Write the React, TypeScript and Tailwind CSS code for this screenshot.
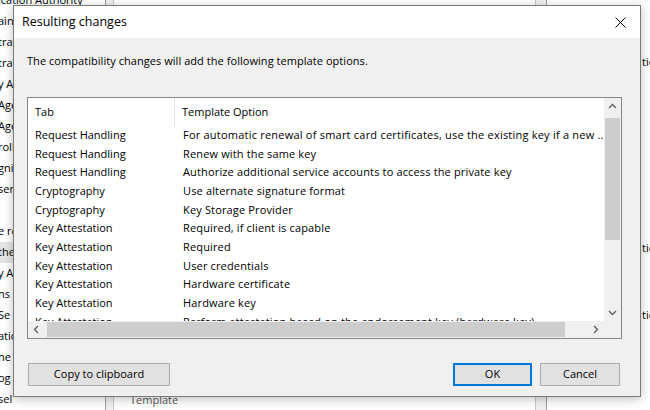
import React from 'react';

const font = "font-['Open_Sans','Noto_Sans',sans-serif]";

const leftItems: { text: string; active?: boolean }[] = [
  { text: 'ication Authority' },
  { text: 'ain Controller' },
  { text: 'tration' },
  { text: 'tration' },
  { text: 'y Agent' },
  { text: 'Agent' },
  { text: 'Agent' },
  { text: 'roll' },
  { text: 'gning' },
  { text: 'ser' },
  { text: '' },
  { text: 'e re' },
  { text: 'the', active: true },
  { text: 'y Agent' },
  { text: 'ns' },
  { text: ' Se' },
  { text: 'ation' },
  { text: 'ne' },
  { text: 'og' },
  { text: 'sel' },
];

const rows: [string, string][] = [
  ['Request Handling', 'For automatic renewal of smart card certificates, use the existing key if a new ...'],
  ['Request Handling', 'Renew with the same key'],
  ['Request Handling', 'Authorize additional service accounts to access the private key'],
  ['Cryptography', 'Use alternate signature format'],
  ['Cryptography', 'Key Storage Provider'],
  ['Key Attestation', 'Required, if client is capable'],
  ['Key Attestation', 'Required'],
  ['Key Attestation', 'User credentials'],
  ['Key Attestation', 'Hardware certificate'],
  ['Key Attestation', 'Hardware key'],
  ['Key Attestation', 'Perform attestation based on the endorsement key (hardware key)'],
];

const Chevron = ({ dir }: { dir: 'up' | 'down' | 'left' | 'right' }) => {
  const pts = {
    up: '1,6 4.5,2.5 8,6',
    down: '1,3 4.5,6.5 8,3',
    left: '6,1 2.5,4.5 6,8',
    right: '3,1 6.5,4.5 3,8',
  }[dir];
  return (
    <svg width="9" height="9" viewBox="0 0 9 9">
      <polyline points={pts} fill="none" stroke="#606060" strokeWidth="1.4" />
    </svg>
  );
};

const Backdrop = () => (
  <div className="flex h-full">
    <div className="w-[106px] shrink-0 bg-white border-r border-[#a0a0a0] overflow-hidden">
      <div className="flex flex-col -mt-[10px]">
        {leftItems.map((item, i) => (
          <div
            key={i}
            className={`h-[21px] flex items-center whitespace-nowrap text-[11px] -ml-[2px] ${item.active ? 'bg-[#e5e5e5]' : ''}`}
          >
            {item.text}
          </div>
        ))}
      </div>
    </div>
    <div className="w-[441px] shrink-0 flex border-r border-[#a0a0a0]">
      <div className="ml-[7px] w-[423px] bg-white border-x border-[#c8c8c8] flex flex-col justify-end">
        <div className="h-[16px] mb-[2px] pl-[16px] text-[11px] text-[#555]">Template</div>
      </div>
    </div>
    <div className="flex-1 min-w-0 overflow-hidden bg-white flex flex-col pl-[95px] text-[11px] whitespace-nowrap">
      <div className="mt-[54px] h-[16px]">tion Policies</div>
      <div className="mt-[170px] h-[16px]">tion</div>
      <div className="mt-[51px] h-[16px]">tion</div>
    </div>
  </div>
);

const Button = ({ label, primary, width }: { label: string; primary?: boolean; width: string }) => (
  <button
    type="button"
    className={`${width} h-[23px] bg-[#e1e1e1] text-[11px] flex items-center justify-center ${
      primary ? 'border-2 border-[#0078d7]' : 'border border-[#adadad]'
    }`}
  >
    {label}
  </button>
);

const ListView = () => (
  <div className="mt-[28px] ml-[13px] w-[595px] h-[242px] border border-[#828790] bg-white flex flex-col">
    <div className="flex h-[223px]">
      <div className="flex-1 overflow-hidden">
        <div className="flex h-[28px] text-[11px]">
          <div className="w-[147px] shrink-0 pl-[7px] flex items-center border-r border-[#e5e5e5]">Tab</div>
          <div className="pl-[7px] flex items-center whitespace-nowrap">Template Option</div>
        </div>
        {rows.map(([tab, option], i) => (
          <div key={i} className="flex h-[18.67px] text-[11px] items-center whitespace-nowrap">
            <div className="w-[148px] shrink-0 pl-[7px]">{tab}</div>
            <div className={`w-[440px] shrink-0 pl-[7px] overflow-hidden ${i === 0 ? 'tracking-[0.22px]' : 'tracking-[0.15px]'}`}>
              {option}
            </div>
          </div>
        ))}
      </div>
      <div className="w-[17px] shrink-0 bg-[#f0f0f0] flex flex-col">
        <div className="h-[17px] flex items-center justify-center">
          <Chevron dir="up" />
        </div>
        <div className="flex-1 flex flex-col pt-[3px]">
          <div className="h-[122px] mx-[1px] bg-[#cdcdcd]" />
        </div>
        <div className="h-[17px] flex items-center justify-center">
          <Chevron dir="down" />
        </div>
      </div>
    </div>
    <div className="flex h-[17px]">
      <div className="flex-1 bg-[#f0f0f0] flex items-center">
        <div className="w-[17px] h-full flex items-center justify-center">
          <Chevron dir="left" />
        </div>
        <div className="ml-[2px] w-[518px] h-[15px] bg-[#cdcdcd]" />
        <div className="flex-1" />
        <div className="w-[17px] h-full flex items-center justify-center">
          <Chevron dir="right" />
        </div>
      </div>
      <div className="w-[17px] bg-[#f0f0f0]" />
    </div>
  </div>
);

export default function App() {
  return (
    <div className={`relative w-[650px] h-[410px] overflow-hidden bg-[#f0f0f0] text-black ${font}`}>
      <Backdrop />
      <div className="absolute left-[13px] top-[5px] w-[628px] h-[392px] border border-[#7a7a7a] bg-[#f0f0f0] flex flex-col shadow-[0_2px_10px_rgba(0,0,0,0.25)]">
        <div className="h-[32px] shrink-0 bg-white flex items-center justify-between pl-[8px] pr-[14px]">
          <span className="text-[12.5px]">Resulting changes</span>
          <svg width="11" height="11" viewBox="0 0 11 11">
            <path d="M0.5 0.5L10.5 10.5M10.5 0.5L0.5 10.5" stroke="#000" strokeWidth="1" />
          </svg>
        </div>
        <div className="flex-1 flex flex-col">
          <p className="pt-[15px] pl-[13px] leading-[16px] text-[11px] tracking-[0.05px]">
            The compatibility changes will add the following template options.
          </p>
          <ListView />
          <div className="mt-[24px] flex pl-[14px] pr-[20px] gap-[8px]">
            <Button label="Copy to clipboard" width="w-[142px]" />
            <div className="flex-1" />
            <Button label="OK" primary width="w-[79px]" />
            <Button label="Cancel" width="w-[80px]" />
          </div>
        </div>
      </div>
    </div>
  );
}
